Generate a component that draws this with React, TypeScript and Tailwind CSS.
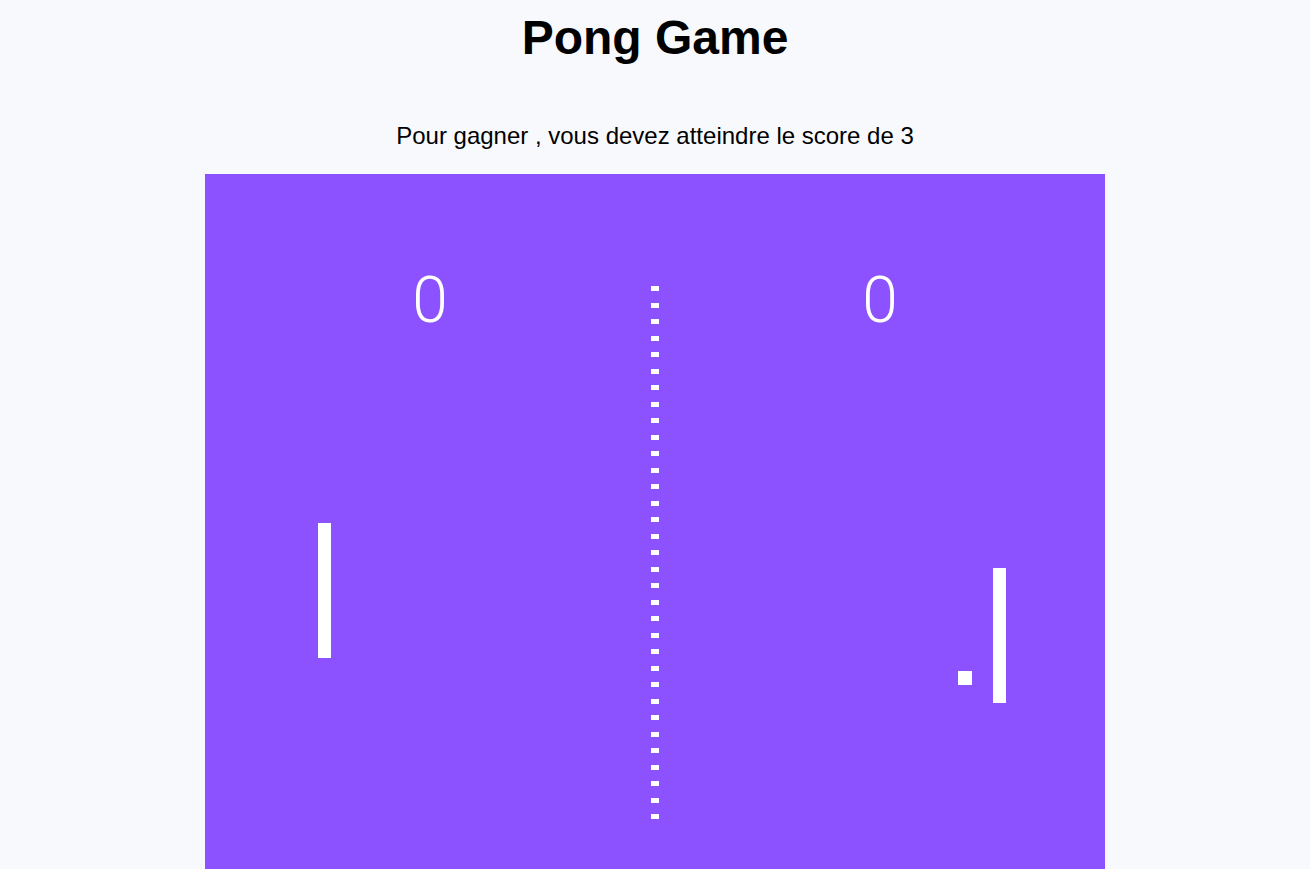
import React from "react";

export default function App() {
  const dashes = Array.from({ length: 33 }, (_, i) => i);
  return (
    <div
      className="min-h-screen w-full bg-[#f8f9fd] flex flex-col items-center text-black"
      style={{ fontFamily: '"Liberation Sans", Arial, sans-serif' }}
    >
      <h1 className="mt-[10px] text-[48px] leading-[56px] font-bold">Pong Game</h1>
      <p className="mt-[56px] text-[24px] leading-[28px]">
        Pour gagner , vous devez atteindre le score de 3
      </p>
      <div className="mt-[24px] relative w-[900px] h-[700px] bg-[#8c52ff] shrink-0">
        <div
          className="absolute top-[95px] left-[225px] -translate-x-1/2 text-white text-[64px] leading-none font-light"
          style={{ fontFamily: 'Roboto, "Open Sans", sans-serif' }}
        >
          0
        </div>
        <div
          className="absolute top-[95px] left-[675px] -translate-x-1/2 text-white text-[64px] leading-none font-light"
          style={{ fontFamily: 'Roboto, "Open Sans", sans-serif' }}
        >
          0
        </div>
        <div className="absolute left-[446px] top-[112px] flex flex-col gap-[11.5px]">
          {dashes.map((i) => (
            <div key={i} className="w-[8px] h-[5px] bg-white" />
          ))}
        </div>
        <div className="absolute left-[112.5px] top-[349px] w-[13.5px] h-[135px] bg-white" />
        <div className="absolute left-[787.5px] top-[393.5px] w-[13.5px] h-[135px] bg-white" />
        <div className="absolute left-[753px] top-[497px] w-[13.5px] h-[13.5px] bg-white" />
      </div>
    </div>
  );
}
